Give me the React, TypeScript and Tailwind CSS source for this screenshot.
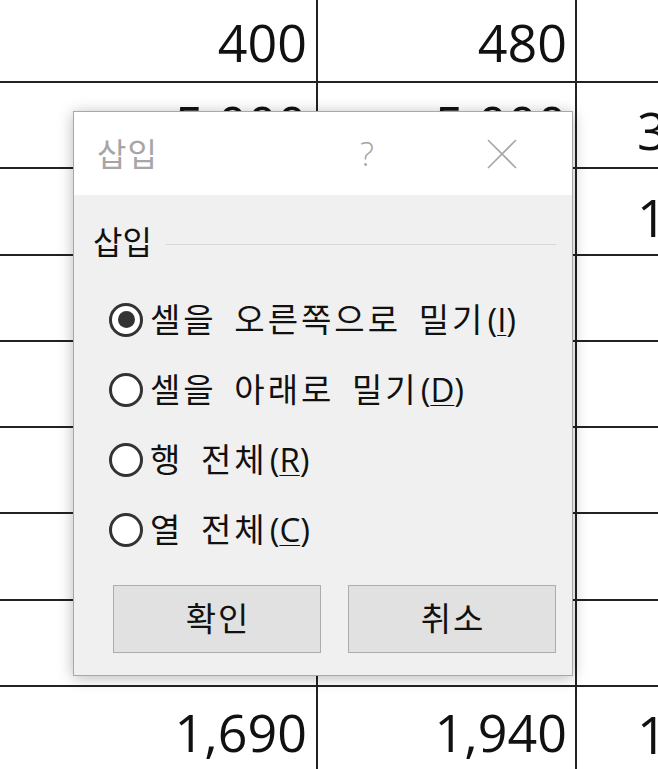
import React from 'react';

const FONT = { fontFamily: '"Open Sans", "Noto Sans CJK KR", sans-serif' };

type Row = { a: string; b: string; c: string; h: string; pb: string };

const ROWS: Row[] = [
  { a: '400', b: '480', c: '', h: 'h-[85px]', pb: 'pb-[13px]' },
  { a: '5,000', b: '5,000', c: '3', h: 'h-[86px]', pb: 'pb-[17px]' },
  { a: '', b: '', c: '1', h: 'h-[87px]', pb: 'pb-[13px]' },
  { a: '', b: '', c: '', h: 'h-[86px]', pb: 'pb-[13px]' },
  { a: '', b: '', c: '', h: 'h-[86px]', pb: 'pb-[13px]' },
  { a: '', b: '', c: '', h: 'h-[86px]', pb: 'pb-[13px]' },
  { a: '', b: '', c: '', h: 'h-[87px]', pb: 'pb-[13px]' },
  { a: '', b: '', c: '', h: 'h-[86px]', pb: 'pb-[13px]' },
  { a: '1,690', b: '1,940', c: '1', h: 'h-[86px]', pb: 'pb-[13px]' },
];

const OPTIONS = [
  { label: '셀을 오른쪽으로 밀기', key: 'I', checked: true },
  { label: '셀을 아래로 밀기', key: 'D', checked: false },
  { label: '행 전체', key: 'R', checked: false },
  { label: '열 전체', key: 'C', checked: false },
];

const Radio = ({ checked }: { checked: boolean }) => (
  <span className="w-[34px] h-[34px] rounded-full border-[3px] border-[#333] bg-white flex items-center justify-center shrink-0">
    {checked && <span className="w-[17px] h-[17px] rounded-full bg-[#333]" />}
  </span>
);

const Sheet = () => (
  <div className="flex flex-col -mt-[2px]">
    {ROWS.map((r, i) => (
      <div key={i} className={`flex ${r.h} shrink-0 border-b-2 border-[#222]`}>
        <div className={`w-[318px] shrink-0 border-r-2 border-[#222] flex items-end justify-end pr-[9px] ${r.pb} text-[52px] leading-none text-[#111]`}>
          {r.a}
        </div>
        <div className={`w-[259px] shrink-0 border-r-2 border-[#222] flex items-end justify-end pr-[8px] ${r.pb} text-[52px] leading-none text-[#111]`}>
          {r.b}
        </div>
        <div className="flex-1 flex items-end pl-[60px] pb-[11px] text-[52px] leading-none text-[#111] overflow-hidden">
          {r.c}
        </div>
      </div>
    ))}
  </div>
);

const InsertDialog = () => (
  <div className="absolute left-[73px] top-[111px] w-[500px] h-[565px] border border-[#a8a8a8] bg-[#f0f0f0] shadow-[0_2px_14px_rgba(0,0,0,0.28)] flex flex-col">
    {/* title bar */}
    <div className="h-[83px] bg-white flex items-center pl-[23px] text-[#a6a6a6]">
      <span className="text-[32px] tracking-[1px]">삽입</span>
      <span className="ml-[202px] text-[33px] font-light">?</span>
      <svg className="ml-[112px]" width="32" height="32" viewBox="0 0 32 32">
        <path d="M2 2 L30 30 M30 2 L2 30" stroke="#a6a6a6" strokeWidth="1.6" fill="none" />
      </svg>
    </div>

    {/* group */}
    <div className="flex items-center pl-[19px] pr-[16px] mt-[23px]">
      <span className="text-[32px] text-[#111]">삽입</span>
      <span className="flex-1 h-px bg-[#d8d8d8] ml-[14px] mt-[4px]" />
    </div>

    <div className="flex flex-col gap-[35px] pl-[35px] mt-[36px]">
      {OPTIONS.map((o) => (
        <div key={o.key} className="flex items-center gap-[7px] h-[35px]">
          <Radio checked={o.checked} />
          <span className="text-[33px] text-[#111] tracking-[3px] [word-spacing:6px]">
            {o.label}
            <span className="tracking-normal ml-[2px]">
              (<span className="underline underline-offset-[3px] decoration-1">{o.key}</span>)
            </span>
          </span>
        </div>
      ))}
    </div>

    <div className="flex gap-[27px] pl-[39px] mt-auto mb-[22px]">
      {['확인', '취소'].map((t) => (
        <button
          key={t}
          className="w-[208px] h-[68px] border border-[#adadad] bg-[#e1e1e1] text-[33px] tracking-[2px] pl-[2px] text-[#111] flex items-center justify-center"
        >
          {t}
        </button>
      ))}
    </div>
  </div>
);

export default function App() {
  return (
    <div className="relative w-[658px] h-[769px] overflow-hidden bg-white" style={FONT}>
      <Sheet />
      <InsertDialog />
    </div>
  );
}
